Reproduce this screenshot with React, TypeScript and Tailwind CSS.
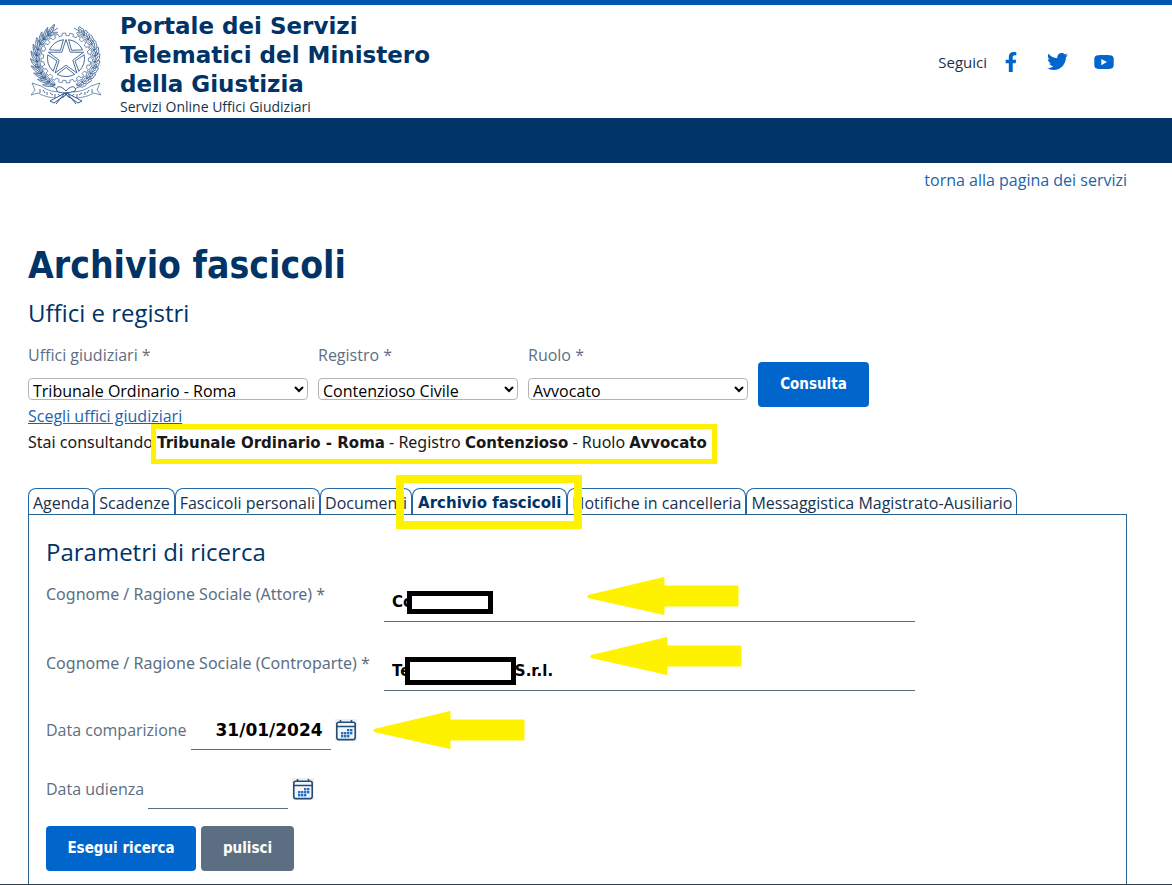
import type { ReactNode } from "react";
import { FaFacebookF, FaTwitter } from "react-icons/fa";

const CX = 36;
const CY = 34;

function polar(radius: number, degrees: number): [number, number] {
  const a = (degrees * Math.PI) / 180;
  return [CX + radius * Math.cos(a), CY + radius * Math.sin(a)];
}

function starPath(outer: number, inner: number) {
  const points = Array.from({ length: 10 }, (_, i) => {
    const [x, y] = polar(i % 2 === 0 ? outer : inner, -90 + i * 36);
    return `${x.toFixed(2)} ${y.toFixed(2)}`;
  });
  return `M${points.join("L")}Z`;
}

function wedgePath(index: number) {
  const base = -90 + index * 72;
  const [ax, ay] = polar(18.5, base + 8);
  const [bx, by] = polar(18.5, base + 64);
  const [cx, cy] = polar(9.5, base + 36);
  return `M${ax} ${ay}A18.5 18.5 0 0 1 ${bx} ${by}L${cx} ${cy}Z`;
}

function gearPath() {
  const teeth = 20;
  const step = 360 / teeth;
  let d = "";
  for (let i = 0; i < teeth; i++) {
    const a = i * step;
    const p = [polar(22.5, a), polar(22.5, a + step * 0.45), polar(25, a + step * 0.5), polar(25, a + step * 0.95)];
    d += p.map(([x, y], k) => `${i === 0 && k === 0 ? "M" : "L"}${x.toFixed(2)} ${y.toFixed(2)}`).join("");
  }
  return d + "Z";
}

function Branch({ oak }: { oak?: boolean }) {
  const leaf = oak
    ? "M0 0C-2.6 -1.2 -2 -3 -1.6 -3.4C-3.2 -4.6 -2.4 -6.2 -1.4 -6.6C-1.8 -8.4 0 -9.6 0 -9.6C0 -9.6 1.8 -8.4 1.4 -6.6C2.4 -6.2 3.2 -4.6 1.6 -3.4C2 -3 2.6 -1.2 0 0ZM0 0V-7"
    : "M0 0C-2.4 -3 -2.2 -7.8 0 -12.5C2.2 -7.8 2.4 -3 0 0ZM0 0V-10";
  const steps = Array.from({ length: 11 }, (_, i) => 112 + i * 12);
  return (
    <g strokeWidth="0.7">
      <path d="M27 65C-1 50 -2 20 28 4" fill="none" />
      {steps.map((angle, i) => {
        const [x, y] = polar(29, angle);
        return (
          <g key={angle} transform={`translate(${x.toFixed(2)} ${y.toFixed(2)}) rotate(${angle - 180})`}>
            <path d={leaf} transform="rotate(-22)" />
            <path d={leaf} transform="rotate(22) scale(0.8)" />
            {i % 2 === 0 && <circle cx="-1.6" cy="-3" r="1" />}
          </g>
        );
      })}
    </g>
  );
}

function Emblem() {
  return (
    <svg viewBox="0 0 72 80" className="mt-1 h-20 w-[72px] shrink-0" role="img" aria-label="Repubblica Italiana" fill="#fff" stroke="#1d4a84" strokeWidth="0.6">
      <path d={gearPath()} />
      <circle cx={CX} cy={CY} r="20.5" stroke="none" />
      {[0, 1, 2, 3, 4].map((i) => (
        <path key={i} d={wedgePath(i)} strokeWidth="0.8" />
      ))}
      <path d={starPath(18.5, 7.2)} strokeWidth="0.8" />
      <Branch />
      <g transform="translate(72 0) scale(-1 1)">
        <Branch oak />
      </g>
      <path d="M2 59L11 62C18 67 26 69 34 67L34 73C24 75 15 73 8 69L1 71L5 66Z" />
      <path d="M70 59L61 62C54 67 46 69 38 67L38 73C48 75 57 73 64 69L71 71L67 66Z" />
      <path d="M36 67C30 60 25 63 27 67C30 70 40 69 45 67C47 63 42 60 36 67ZM35 69L20 77L24 79L37 70ZM37 69L52 77L48 79L35 70ZM34 70L26 80M38 70L46 80" strokeWidth="0.9" />
      <path d="M10 65v4M13 66l2 3M17 68v3M20 69l3 2M25 70v3M28 70l2 2M62 65v4M59 66l-2 3M55 68v3M52 69l-3 2M47 70v3M44 70l-2 2" strokeWidth="0.8" />
    </svg>
  );
}

function YoutubeIcon() {
  return (
    <svg viewBox="0 0 20 14" className="h-[14px] w-5" aria-hidden="true">
      <path fill="#06c" fillRule="evenodd" d="M3.5 0.3C7 -0.1 13 -0.1 16.5 0.3C18.8 0.5 19.7 2 19.7 4V10C19.7 12 18.8 13.5 16.5 13.7C13 14.1 7 14.1 3.5 13.7C1.2 13.5 0.3 12 0.3 10V4C0.3 2 1.2 0.5 3.5 0.3ZM7.3 3.9V10.3L13 7.1Z" />
    </svg>
  );
}

function CalendarIcon() {
  const cells = [
    [12, 10], [15, 10],
    [6, 13], [9, 13], [12, 13], [15, 13],
    [6, 16], [9, 16], [12, 16],
  ];
  return (
    <svg viewBox="0 0 22 22" className="block size-[22px]" aria-hidden="true">
      <rect width="22" height="22" fill="#eceff2" />
      <rect x="1.8" y="3.2" width="18.4" height="17.4" rx="2" fill="#f4f7fa" stroke="#234d74" strokeWidth="1.6" />
      <path d="M1.5 7.5H20.5M5.5 1V4M16.5 1V4" stroke="#234d74" strokeWidth="1.5" />
      {cells.map(([x, y]) => (
        <rect key={`${x}-${y}`} x={x} y={y} width="2.4" height="2.4" fill="#1f6fc4" />
      ))}
    </svg>
  );
}

function Arrow({ className }: { className: string }) {
  return (
    <svg viewBox="0 0 152 38" className={`pointer-events-none absolute h-[38px] w-[152px] ${className}`} aria-hidden="true">
      <path d="M1 18.5L77 0.5V9H151V29H77V37.5L1 20.5Z" fill="#fff200" stroke="#fff200" strokeLinejoin="round" />
    </svg>
  );
}

function Redaction({ className }: { className: string }) {
  return <span className={`absolute border-[5px] border-black bg-white ${className}`} />;
}

function SelectField({ id, label, value, width }: { id: string; label: string; value: string; width: string }) {
  return (
    <div className={width}>
      <label htmlFor={id} className="block leading-6 text-[#5c6f82]">{label}</label>
      <select id={id} className="mt-[11px] block h-[22px] w-full rounded border border-[#b4b4b4] bg-white text-black">
        <option>{value}</option>
      </select>
    </div>
  );
}

const tabs = ["Agenda", "Scadenze", "Fascicoli personali", "Documenti", "Archivio fascicoli", "Notifiche in cancelleria", "Messaggistica Magistrato-Ausiliario"];

function Tab({ name }: { name: string }) {
  const active = name === "Archivio fascicoli";
  return (
    <li className={active ? "relative z-10" : ""}>
      <a
        href="#"
        className={
          "block h-[26px] rounded-t-lg border border-b-0 border-[#2468a8] leading-[28px] whitespace-nowrap " +
          (active ? "px-[5px] font-['DejaVu_Sans',sans-serif] text-[15px] font-bold text-[#036]" : "px-1 text-[#17324d]")
        }
      >
        {name}
      </a>
      {active && <span className="pointer-events-none absolute -top-[13px] -right-[15px] -bottom-[15px] -left-4 border-8 border-[#fff200]" />}
    </li>
  );
}

function Strong({ children }: { children: ReactNode }) {
  return <b className="font-['DejaVu_Sans',sans-serif] text-[15px] font-bold">{children}</b>;
}

const buttonStyle = "h-[45px] rounded font-['DejaVu_Sans_Condensed','DejaVu_Sans',sans-serif] text-[15px] font-bold text-white";
const fieldStyle = "h-10 border-b border-[#5c6f82] bg-transparent px-2 font-['DejaVu_Sans',sans-serif] font-bold text-black outline-none";
const partyLabelStyle = "w-[338px] shrink-0 font-['Noto_Sans',sans-serif] leading-6 text-[#5c6f82]";

export default function App() {
  return (
    <div className="flex min-h-screen flex-col border-b border-[#2f3f4f] bg-white font-['Open_Sans','Noto_Sans',sans-serif] text-[16px] text-[#19191a]">
      <header>
        <div className="flex h-[118px] items-center justify-between border-t-[5px] border-[#0057b0] pr-[58px] pl-[30px]">
          <div className="flex items-center gap-[18px]">
            <Emblem />
            <div className="pt-1 text-[#036]">
              <p className="max-w-[330px] font-['DejaVu_Sans',sans-serif] text-[23px] leading-[29px] font-bold">
                Portale dei Servizi Telematici del Ministero della Giustizia
              </p>
              <p className="text-[14px] leading-4 text-[#17324d]">Servizi Online Uffici Giudiziari</p>
            </div>
          </div>
          <div className="flex items-center text-[#06c]">
            <span className="mr-[14px] pt-[2px] text-[15px] text-[#17324d]">Seguici</span>
            <a href="#" aria-label="Facebook" className="mr-[26px]"><FaFacebookF className="size-5" /></a>
            <a href="#" aria-label="Twitter" className="mr-[26px]"><FaTwitter className="size-[21px]" /></a>
            <a href="#" aria-label="YouTube"><YoutubeIcon /></a>
          </div>
        </div>
        <div className="h-[45px] bg-[#036]" />
      </header>

      <main className="flex grow flex-col pr-[45px] pl-7">
        <a href="#" className="mt-[5px] self-end leading-6 text-[#1c63ab]">torna alla pagina dei servizi</a>
        <h1 className="mt-[50px] font-['DejaVu_Sans_Condensed','DejaVu_Sans',sans-serif] text-[37px] leading-[48px] font-bold text-[#036]">Archivio fascicoli</h1>
        <h2 className="mt-[7px] text-[24px] leading-8 text-[#036]">Uffici e registri</h2>

        <form className="mt-[14px] flex flex-wrap items-start gap-x-[10px]" onSubmit={(e) => e.preventDefault()}>
          <SelectField id="ufficio" label="Uffici giudiziari *" value="Tribunale Ordinario - Roma" width="w-[280px]" />
          <SelectField id="registro" label="Registro *" value="Contenzioso Civile" width="w-[200px]" />
          <SelectField id="ruolo" label="Ruolo *" value="Avvocato" width="w-[220px]" />
          <button className={`mt-[19px] w-[111px] bg-[#06c] ${buttonStyle}`}>Consulta</button>
        </form>
        <a href="#" className="-mt-[3px] self-start leading-6 text-[#1c63ab] underline">Scegli uffici giudiziari</a>
        <p className="mt-[2px] font-['Noto_Sans',sans-serif] leading-6">
          Stai consultando{" "}
          <span className="relative inline-block">
            <Strong>Tribunale Ordinario - Roma</Strong> - Registro <Strong>Contenzioso</Strong> - Ruolo <Strong>Avvocato</Strong>
            <span className="pointer-events-none absolute -top-[6px] -right-[10px] -bottom-[9px] -left-[6px] border-[5px] border-[#fff200]" />
          </span>
        </p>

        <nav className="mt-[33px]">
          <ul className="flex">
            {tabs.map((name) => <Tab key={name} name={name} />)}
          </ul>
        </nav>

        <section className="grow border border-b-0 border-[#2a6592] px-[17px] pt-[21px] pb-3">
          <h2 className="text-[24px] leading-8 text-[#036]">Parametri di ricerca</h2>
          <form className="mt-[14px]" onSubmit={(e) => e.preventDefault()}>
            <div className="flex">
              <label htmlFor="attore" className={partyLabelStyle}>Cognome / Ragione Sociale (Attore) *</label>
              <div className="relative">
                <input id="attore" defaultValue="Co" className={`w-[531px] max-w-full text-[15px] ${fieldStyle}`} />
                <Redaction className="top-[9px] left-[23px] h-[23px] w-[86px]" />
                <Arrow className="-top-[5px] left-[203px]" />
              </div>
            </div>
            <div className="mt-[29px] flex">
              <label htmlFor="controparte" className={partyLabelStyle}>Cognome / Ragione Sociale (Controparte) *</label>
              <div className="relative">
                <input id="controparte" defaultValue={"Te" + "\u00a0".repeat(20) + "S.r.l."} className={`w-[531px] max-w-full text-[15px] ${fieldStyle}`} />
                <Redaction className="top-[6px] left-[21px] h-7 w-[111px]" />
                <Arrow className="-top-[14px] left-[206px]" />
              </div>
            </div>
            <div className="mt-[19px] flex items-center">
              <label htmlFor="comparizione" className="mr-1 text-[#5c6f82]">Data comparizione</label>
              <input id="comparizione" defaultValue="31/01/2024" className={`w-[140px] text-right text-[17px] ${fieldStyle}`} />
              <button type="button" aria-label="Scegli data comparizione" className="relative ml-1">
                <CalendarIcon />
                <Arrow className="-top-2 left-[38px]" />
              </button>
            </div>
            <div className="mt-[19px] flex items-center">
              <label htmlFor="udienza" className="mr-1 text-[#5c6f82]">Data udienza</label>
              <input id="udienza" className={`w-[140px] text-right text-[17px] ${fieldStyle}`} />
              <button type="button" aria-label="Scegli data udienza" className="ml-1">
                <CalendarIcon />
              </button>
            </div>
            <div className="mt-[17px] flex gap-[5px]">
              <button className={`w-[150px] bg-[#06c] ${buttonStyle}`}>Esegui ricerca</button>
              <button type="reset" className={`w-[93px] bg-[#5c6f82] ${buttonStyle}`}>pulisci</button>
            </div>
          </form>
        </section>
      </main>
    </div>
  );
}
